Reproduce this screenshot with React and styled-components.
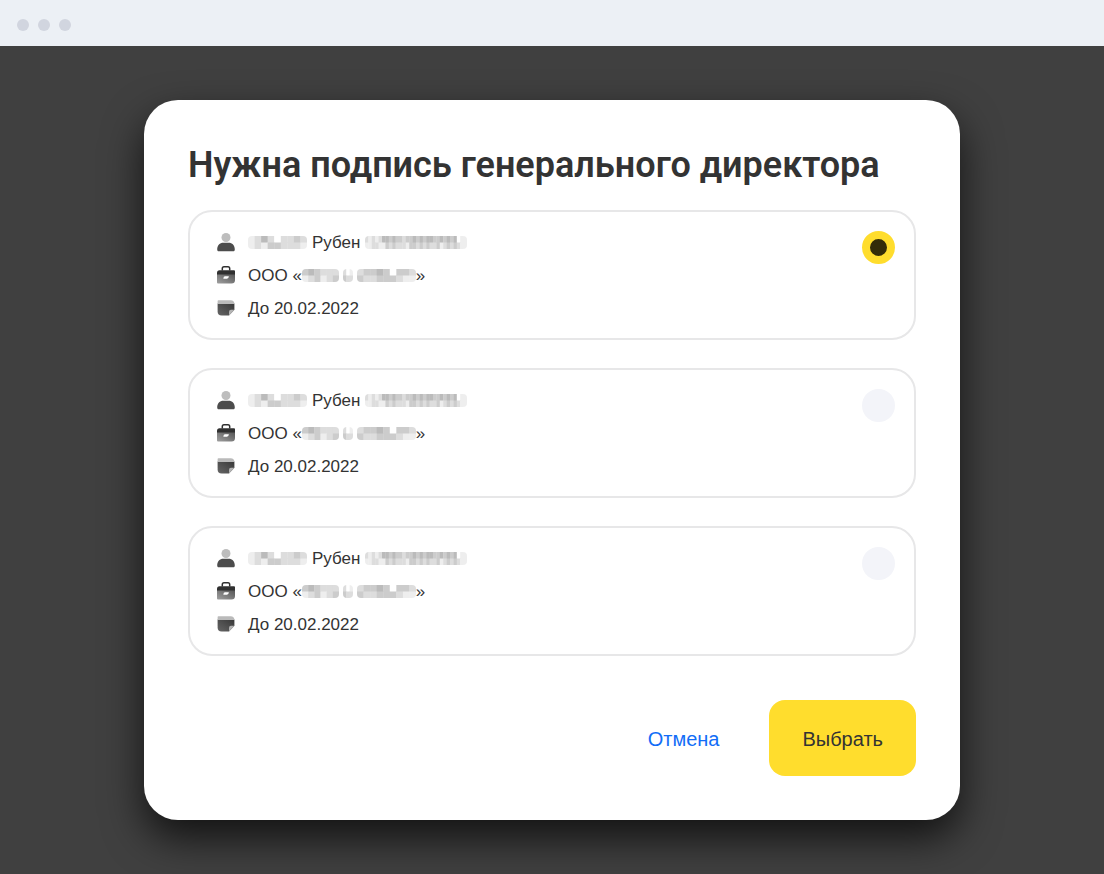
import React, { useState } from "react";
import styled, { createGlobalStyle } from "styled-components";

const GlobalStyle = createGlobalStyle`
  * {
    box-sizing: border-box;
  }
  body {
    margin: 0;
    background: #404040;
    color: #333333;
    font-family: "Liberation Sans", Arial, sans-serif;
  }
`;

const Page = styled.div`
  min-height: 100vh;
  display: flex;
  flex-direction: column;
`;

const WindowBar = styled.header`
  height: 46px;
  padding: 3px 17px 0;
  display: flex;
  align-items: center;
  gap: 9px;
  background: #ecf0f5;
`;

const WindowDot = styled.span`
  width: 12px;
  height: 12px;
  border-radius: 50%;
  background: #d1d5df;
`;

const Overlay = styled.main`
  flex: 1;
  display: flex;
  justify-content: center;
  align-items: flex-start;
  padding: 54px 24px;
`;

const Modal = styled.form`
  width: 100%;
  max-width: 816px;
  padding: 43px 44px 44px;
  border-radius: 34px;
  background: #ffffff;
  box-shadow: 0 18px 40px rgba(0, 0, 0, 0.72);
`;

const Title = styled.h1`
  margin: 0 0 23px;
  font-family: Roboto, "Liberation Sans", sans-serif;
  font-weight: 600;
  font-size: 36px;
  line-height: 44px;
`;

const Options = styled.div`
  display: flex;
  flex-direction: column;
  gap: 28px;
`;

const Card = styled.label`
  display: flex;
  justify-content: space-between;
  align-items: flex-start;
  padding: 14px 19px 13px 27px;
  border: 2px solid #e7e7e8;
  border-radius: 24px;
  cursor: pointer;
`;

const Row = styled.div`
  height: 33px;
  display: flex;
  align-items: center;
  gap: 13px;
  font-size: 17px;
  line-height: 24px;
`;

const RowText = styled.span`
  display: flex;
  align-items: center;
  gap: ${({ $gap }) => $gap || 0}px;
`;

const Redacted = styled.svg`
  display: block;
  height: 13px;
  border-radius: 4px;
`;

const Radio = styled.input`
  appearance: none;
  flex: none;
  width: 33px;
  height: 33px;
  margin: 5px 0 0;
  border: 8px solid #f3f4f9;
  border-radius: 50%;
  background: #f3f4f9;
  cursor: pointer;
  &:checked {
    border-color: #ffdd2d;
    background: #332c09;
  }
`;

const Footer = styled.footer`
  display: flex;
  justify-content: flex-end;
  gap: 17px;
  margin-top: 44px;
`;

const Button = styled.button`
  height: 76px;
  padding: 2px 33px 0;
  border: none;
  border-radius: 16px;
  background: ${({ $primary }) => ($primary ? "#ffdd2d" : "transparent")};
  color: ${({ $primary }) => ($primary ? "#333333" : "#126df7")};
  font-family: inherit;
  font-size: 20px;
  cursor: pointer;
`;

const PersonIcon = () => (
  <svg width="18" height="22" viewBox="0 0 18 22" aria-hidden="true">
    <circle cx="9" cy="5.500" r="4.500" fill="#bdbdbd" />
    <path d="M.2 17.400c0-3.900 2.600-6.600 6.200-6.600h5.200c3.600 0 6.200 2.700 6.200 6.600 0 1.300-.7 1.800-1.800 1.800H2c-1.100 0-1.800-.5-1.800-1.800z" fill="#4c4c4c" />
  </svg>
);

const BriefcaseIcon = () => (
  <svg width="18" height="22" viewBox="0 0 18 22" aria-hidden="true">
    <defs>
      <linearGradient id="case" x1="0" y1="1" x2="1" y2="0">
        <stop offset="0" stopColor="#a0a0a0" />
        <stop offset="1" stopColor="#555555" />
      </linearGradient>
    </defs>
    <path d="M5.300 5.500V3.600Q5.300 1.800 7 1.800h4q1.700 0 1.700 1.800v1.900" fill="none" stroke="#303030" strokeWidth="1.500" />
    <path d="M0 9h18v6q0 3.500-3.500 3.500H1q-1 0-1-1z" fill="url(#case)" />
    <path d="M2.500 5.200H17q1 0 1 1v3.400H0V7.700q0-2.500 2.500-2.500z" fill="#303030" />
    <path d="M8 11.300h3.900q-.2 2.400-2 2.400H6.300q.2-2.400 1.700-2.400z" fill="#ffffff" />
  </svg>
);

const NoteIcon = () => (
  <svg width="18" height="22" viewBox="0 0 18 22" aria-hidden="true">
    <defs>
      <linearGradient id="note" x1="0" y1="1" x2="1" y2="0">
        <stop offset="0" stopColor="#666666" />
        <stop offset="1" stopColor="#383838" />
      </linearGradient>
    </defs>
    <path d="M.6 5.500h16.800v6.300L12 17.600H4.600q-4 0-4-4z" fill="url(#note)" />
    <path d="M.6 3q0-.8.8-.8h12.200q3.800 0 3.800 3.800H.6z" fill="#bababa" />
    <path d="M17.400 11.800 12 17.600v-3.800q0-2 2-2z" fill="#b4b4b4" />
  </svg>
);

// Two rows of grey levels, one hex digit per cell (f is white)
const Mosaic = ({ width, rows }) => (
  <Redacted width={width} viewBox={`0 0 ${width} 13`} aria-label="скрыто" role="img">
    {rows.map((row, y) =>
      row.split("").map((level, x) => {
        const cell = width / row.length;
        return (
          <rect
            key={`${y}-${x}`}
            x={x * cell}
            y={y * 6.5}
            width={cell + 0.3}
            height={7}
            fill={`#${level}${level}${level}`}
          />
        );
      })
    )}
  </Redacted>
);

const SURNAME = ["edbdfddcd", "edeccddde"];
const PATRONYMIC = ["dededbbcbccdccbcbcbbccbcbcbfee", "eeddeecdcdddeccdcdcddcedcdcdee"];
const COMPANY = [
  { width: 37, rows: ["cbcddd", "edcedc"] },
  { width: 10, rows: ["dfe", "cdd"] },
  { width: 59, rows: ["dccbcfccd", "cddcccdee"] },
];

const options = [
  { id: "1", name: "Рубен", until: "20.02.2022" },
  { id: "2", name: "Рубен", until: "20.02.2022" },
  { id: "3", name: "Рубен", until: "20.02.2022" },
];

const Option = ({ option, checked, onChange }) => (
  <Card>
    <div>
      <Row>
        <PersonIcon />
        <RowText $gap={5}>
          <Mosaic width={59} rows={SURNAME} />
          {option.name}
          <Mosaic width={102} rows={PATRONYMIC} />
        </RowText>
      </Row>
      <Row>
        <BriefcaseIcon />
        <RowText>
          ООО «
          <RowText $gap={4}>
            {COMPANY.map((part) => (
              <Mosaic key={part.width} {...part} />
            ))}
          </RowText>
          »
        </RowText>
      </Row>
      <Row>
        <NoteIcon />
        <RowText>До {option.until}</RowText>
      </Row>
    </div>
    <Radio
      type="radio"
      name="signer"
      value={option.id}
      checked={checked}
      onChange={() => onChange(option.id)}
    />
  </Card>
);

const App = () => {
  const [selected, setSelected] = useState("1");

  return (
    <Page>
      <GlobalStyle />
      <WindowBar>
        <WindowDot />
        <WindowDot />
        <WindowDot />
      </WindowBar>
      <Overlay>
        <Modal onSubmit={(e) => e.preventDefault()}>
          <Title>Нужна подпись генерального директора</Title>
          <Options>
            {options.map((option) => (
              <Option
                key={option.id}
                option={option}
                checked={selected === option.id}
                onChange={setSelected}
              />
            ))}
          </Options>
          <Footer>
            <Button type="button">Отмена</Button>
            <Button type="submit" $primary>
              Выбрать
            </Button>
          </Footer>
        </Modal>
      </Overlay>
    </Page>
  );
};

export default App;
